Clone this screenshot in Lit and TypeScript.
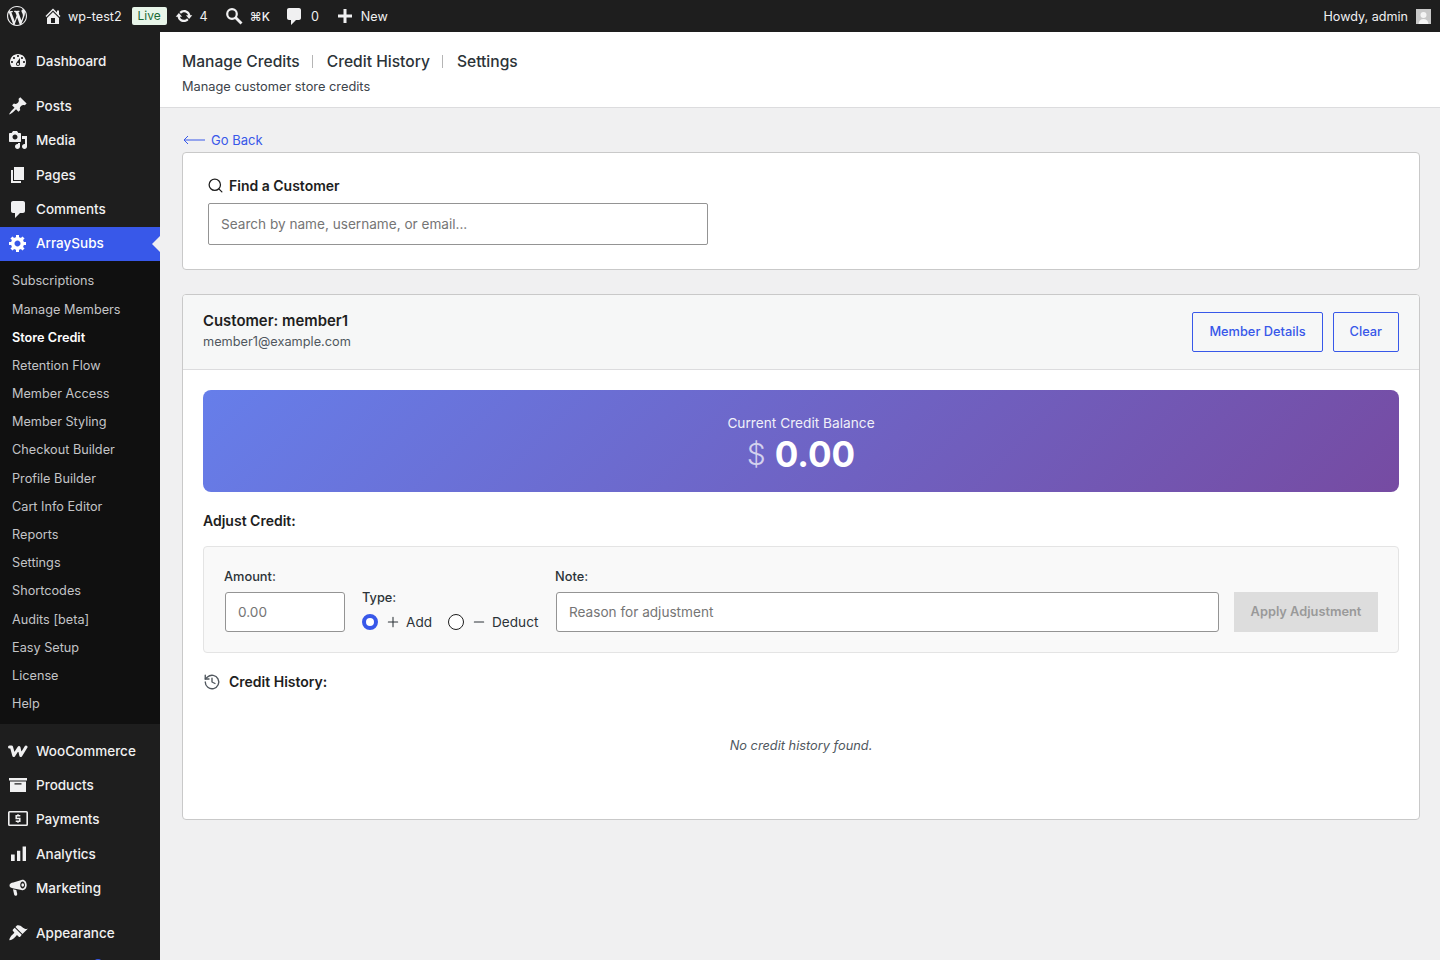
import { LitElement, html, css, svg } from 'lit';
import { customElement } from 'lit/decorators.js';

const dash = (d: string) => html`<svg class="dash" viewBox="0 0 20 20" fill="currentColor"><path d=${d} /></svg>`;

const icons: Record<string, unknown> = {
  wp: dash('M20 10c0-5.51-4.49-10-10-10C4.48 0 0 4.49 0 10c0 5.52 4.48 10 10 10 5.51 0 10-4.48 10-10zM7.78 15.37L4.37 6.22c.55-.02 1.17-.08 1.17-.08.5-.06.44-1.13-.06-1.11 0 0-1.45.11-2.37.11-.18 0-.37 0-.58-.01C4.12 2.69 6.87 1.11 10 1.11c2.33 0 4.45.87 6.05 2.34-.68-.11-1.65.39-1.65 1.58 0 .74.45 1.36.9 2.1.35.61.55 1.36.55 2.46 0 1.49-1.4 5-1.4 5l-3.03-8.37c.54-.02.82-.17.82-.17.5-.05.44-1.25-.06-1.22 0 0-1.44.12-2.38.12-.87 0-2.33-.12-2.33-.12-.5-.03-.56 1.2-.06 1.22l.92.08 1.26 3.41zM17.41 10c.24-.64.74-1.87.43-4.25.7 1.29 1.05 2.71 1.05 4.25 0 3.29-1.73 6.24-4.4 7.78.97-2.59 1.94-5.2 2.92-7.78zM6.1 18.09C3.12 16.65 1.11 13.53 1.11 10c0-1.3.23-2.48.72-3.59C3.25 10.3 4.67 14.2 6.1 18.09zm4.03-6.63l2.58 6.98c-.86.29-1.76.45-2.71.45-.79 0-1.57-.11-2.29-.33.81-2.38 1.62-4.74 2.42-7.1z'),
  home: dash('M16 8.5l1.53 1.53-1.06 1.06L10 4.62l-6.47 6.47-1.06-1.06L10 2.5l4 4v-2h2v4zm-6-2.46l6 5.99V18H4v-5.97zM12 17v-5H8v5h4z'),
  update: dash('M10.2 3.28c3.53 0 6.43 2.61 6.92 6h2.08l-3.5 4-3.5-4h2.32c-.45-1.97-2.21-3.45-4.32-3.45-1.45 0-2.73.71-3.54 1.78L4.95 5.66C6.23 4.2 8.11 3.28 10.2 3.28zm-.4 13.44c-3.52 0-6.43-2.61-6.92-6H.8l3.5-4c1.17 1.33 2.33 2.67 3.5 4H5.48c.45 1.97 2.21 3.45 4.32 3.45 1.45 0 2.73-.71 3.54-1.78l1.71 1.95c-1.28 1.46-3.15 2.38-5.25 2.38z'),
  search: html`<svg class="dash" viewBox="0 0 20 20" fill="none" stroke="currentColor"><circle cx="8" cy="8" r="4.800" stroke-width="2.200" /><path d="M11.500 11.500l6 6" stroke-width="2.800" /></svg>`,
  comment: dash('M5 2h10c1.1 0 2 .9 2 2v8c0 1.1-.9 2-2 2h-3l-5 5v-5H5c-1.1 0-2-.9-2-2V4c0-1.1.9-2 2-2z'),
  plus: dash('M17 8.500v3h-5.500V17h-3v-5.500H3v-3h5.500V3h3v5.500H17z'),
  dashboard: dash('M3.76 16h12.48c1.1-1.37 1.76-3.11 1.76-5 0-4.42-3.58-8-8-8s-8 3.58-8 8c0 1.89.66 3.63 1.76 5zM10 4c.55 0 1 .45 1 1s-.45 1-1 1-1-.45-1-1 .45-1 1-1zM6 6c.55 0 1 .45 1 1s-.45 1-1 1-1-.45-1-1 .45-1 1-1zm8 0c.55 0 1 .45 1 1s-.45 1-1 1-1-.45-1-1 .45-1 1-1zm-5.37 5.55L12 7v6c0 1.1-.9 2-2 2s-2-.9-2-2c0-.57.24-1.08.63-1.45zM4 10c.55 0 1 .45 1 1s-.45 1-1 1-1-.45-1-1 .45-1 1-1zm12 0c.55 0 1 .45 1 1s-.45 1-1 1-1-.45-1-1 .45-1 1-1zm-5 3c0-.55-.45-1-1-1s-1 .45-1 1 .45 1 1 1 1-.45 1-1z'),
  posts: dash('M10.44 3.02l1.82-1.82 6.36 6.35-1.83 1.82c-1.05-.68-2.48-.57-3.41.36l-.75.75c-.92.93-1.04 2.35-.35 3.41l-1.83 1.82-2.41-2.41-2.8 2.79c-.42.42-3.38 2.71-3.8 2.29s1.86-3.39 2.28-3.81l2.79-2.79L4.1 9.36l1.83-1.82c1.05.69 2.48.57 3.4-.36l.75-.75c.93-.92 1.05-2.35.36-3.41z'),
  media: dash('M13 11V4c0-.55-.45-1-1-1h-1.67L9 1H5L3.67 3H2c-.55 0-1 .45-1 1v7c0 .55.45 1 1 1h10c.55 0 1-.45 1-1zM7 4.5c1.38 0 2.5 1.12 2.5 2.5S8.38 9.5 7 9.5 4.5 8.38 4.5 7 5.62 4.5 7 4.5zM14 6h5v10.5c0 1.38-1.12 2.5-2.5 2.5S14 17.88 14 16.5s1.12-2.5 2.5-2.5c.17 0 .34.02.5.05V9h-3V6zm-4 8.05V13h2v3.5c0 1.38-1.12 2.5-2.5 2.5S7 17.88 7 16.5 8.12 14 9.5 14c.17 0 .34.02.5.05z'),
  pages: dash('M6 15V2h10v13H6zm-1 1h8v2H3V5h2v11z'),
  gear: dash('M18 12h-2.18c-.17.7-.44 1.35-.81 1.93l1.54 1.54-2.1 2.1-1.54-1.54c-.58.36-1.23.63-1.91.79V19H8v-2.18c-.68-.16-1.33-.43-1.91-.79l-1.54 1.54-2.12-2.12 1.54-1.54c-.36-.58-.63-1.23-.79-1.91H1V9.03h2.17c.16-.7.44-1.35.8-1.94L2.43 5.55l2.1-2.1 1.54 1.54c.58-.37 1.24-.64 1.93-.81V2h3v2.18c.68.16 1.33.43 1.91.79l1.54-1.54 2.12 2.12-1.54 1.54c.36.59.64 1.24.8 1.94H18V12zm-8.5 1.5c1.66 0 3-1.34 3-3s-1.34-3-3-3-3 1.34-3 3 1.34 3 3 3z'),
  woo: html`<svg class="dash" viewBox="0 0 20 20" fill="none" stroke="currentColor" stroke-width="3" stroke-linejoin="round" stroke-linecap="round"><path d="M1.500 6h2l2.300 8.500L11 6.500l1.800 8L18 6" /></svg>`,
  products: dash('M19 3v2.400H1V3h18zM2 6.400h16V17H2V6.400zm11.500 3V8.200h-7v1.200h7z'),
  payments: html`<svg class="dash" viewBox="0 0 20 20" fill="none" stroke="currentColor"><rect x=".800" y="2.800" width="18.400" height="13.400" rx=".8" stroke-width="1.600" /><path d="M12.300 6.800H8.200v2.600h3.600v2.800H7.700M10 5.200v1.600M10 12.200v1.600" stroke-width="1.500" /></svg>`,
  analytics: dash('M18 17V2.500h-3.400V17H18zm-5.700 0V6.800H9V17h3.300zm-5.600 0v-6.500H3V17h3.700z'),
  marketing: dash('M14.600 1.800c2.300 0 4.100 2.300 4.100 5.200s-1.800 5.200-4.100 5.200c-.4 0-.8-.1-1.100-.2L5.700 10.400C3.200 10.200 1.500 9.300 1.500 7.500s1.600-2.700 3.800-3l8.200-2.500c.3-.1.700-.2 1.100-.2zm0 1.600c-1.200 0-2.400 1.500-2.400 3.600s1.200 3.600 2.400 3.600S17 9.100 17 7s-1.200-3.600-2.400-3.600zm.1 1.900c.8 0 1.300.8 1.300 1.700s-.5 1.700-1.300 1.700-1.300-.8-1.300-1.700.5-1.700 1.300-1.700zM5 11.200l3.300.8.900 3.800c.2.800-.3 1.700-1.100 1.900-.8.200-1.600-.2-1.900-1L5 11.200z'),
  appearance: dash('M14.480 11.060L7.410 3.990l1.500-1.500c.5-.56 2.300-.47 3.510.32 1.210.8 1.430 1.280 2.910 2.100 1.180.64 2.450 1.260 4.450.85zm-.710.710L6.700 4.700 4.930 6.470c-.39.39-.39 1.020 0 1.410l1.060 1.060c.39.39.39 1.030 0 1.420-.6.6-2.500 2.100-3.200 3.100-.7 1-1.800 3.200-1.300 3.700.5.500 2.700-.6 3.700-1.300 1-.7 2.500-2.600 3.100-3.200.39-.39 1.030-.39 1.420 0l1.060 1.060c.39.39 1.020.39 1.410 0z'),
  plugins: dash('M13.110 4.360L9.870 7.600 8 5.730l3.240-3.240c.35-.34 1.050-.2 1.560.32.520.51.660 1.210.31 1.550zm-8 1.770l.91-1.120 9.010 9.010-1.190.84c-.71.710-2.630 1.160-3.820 1.160H6.140L4.900 17.260c-.59.59-1.540.59-2.120 0-.59-.58-.59-1.530 0-2.120l1.240-1.240v-3.880c0-1.130.4-3.190 1.090-3.890zm7.260 3.970l3.240-3.240c.34-.35 1.040-.21 1.550.31.520.51.660 1.210.31 1.550l-3.240 3.250z'),
};

const lucide = (body: unknown, cls = 'line') => html`<svg class=${cls} viewBox="0 0 24 24" fill="none" stroke="currentColor" stroke-width="1.800" stroke-linecap="round" stroke-linejoin="round">${body}</svg>`;

const subItems = ['Subscriptions', 'Manage Members', 'Store Credit', 'Retention Flow', 'Member Access', 'Member Styling', 'Checkout Builder', 'Profile Builder', 'Cart Info Editor', 'Reports', 'Settings', 'Shortcodes', 'Audits [beta]', 'Easy Setup', 'License', 'Help'];

@customElement('app-root')
export class AppRoot extends LitElement {
  static styles = css`
    :host {
      display: block;
      height: 960px;
      overflow: hidden;
      background: #f0f0f1;
      font-family: Inter, 'Noto Sans', sans-serif;
      color: #1e1e1e;
      font-size: 13px;
    }
    * { box-sizing: border-box; }
    .dash { width: 20px; height: 20px; display: block; flex: none; }
    .line { width: 16px; height: 16px; display: block; flex: none; }

    .adminbar {
      height: 32px;
      background: #1e1e1e;
      color: #f0f0f1;
      display: flex;
      align-items: center;
      padding: 0 9px 0 7px;
      font-size: 12.600px;
    }
    .ab-item { display: flex; align-items: center; }
    .wp { margin-right: 16px; }
    .site { gap: 5px; margin-right: 10px; }
    .live {
      background: #e8f5e9;
      color: #1a6b35;
      font-size: 12px;
      line-height: 18px;
      height: 18px;
      width: 35px;
      text-align: center;
      border-radius: 2px;
      margin-right: 8px;
    }
    .updates { gap: 7px; margin-right: 16px; }
    .updates .dash { width: 18px; height: 18px; }
    .finder { gap: 6px; margin-right: 14px; font-size: 12px; font-weight: 500; }
    .comments { gap: 7px; margin-right: 16px; }
    .new { gap: 6px; }
    .howdy { margin-left: auto; display: flex; align-items: center; gap: 8px; }
    .avatar { width: 15px; height: 15px; display: block; }

    .body { display: flex; height: 928px; }
    .sidebar { width: 160px; flex: none; background: #1e1e1e; color: #f0f0f1; padding-top: 12px; overflow: hidden; }
    .item {
      height: 34.330px;
      display: flex;
      align-items: center;
      padding-left: 8px;
      padding-bottom: 1px;
      gap: 8px;
      font-size: 13.500px;
      font-weight: 500;
      position: relative;
    }
    .item .dash { color: #f0f0f1; }
    .item.gap { margin-top: 11px; }
    .item.woo { margin-top: 10px; }
    .item.current { background: #3858e9; color: #fff; }
    .item.current .dash { color: #fff; }
    .item.current::after {
      content: '';
      position: absolute;
      right: 0;
      top: 9px;
      border: 8px solid transparent;
      border-right-color: #f0f0f1;
      border-left: 0;
    }
    .badge {
      position: absolute;
      left: 94px;
      top: 8px;
      width: 8px;
      height: 16px;
      border-radius: 4px;
      background: #3858e9;
    }
    .sub { background: #101010; padding: 6.400px 0 5.600px; }
    .sub div { height: 28.200px; line-height: 27.200px; padding-left: 12px; font-size: 12.700px; color: #c3c4c7; }
    .sub .on { color: #fff; font-weight: 600; }

    .main { flex: 1; min-width: 0; }
    .head { height: 76px; background: #fff; border-bottom: 1px solid #dcdcde; padding: 17px 22px 0; }
    .tabs { display: flex; align-items: center; height: 24px; font-size: 15.600px; font-weight: 500; color: #2c3338; }
    .tabs i { width: 1px; height: 13px; background: #b5b5b5; margin: 0 14px 0 12px; }
    .desc { margin-top: 5px; height: 18px; line-height: 18px; font-size: 12.800px; color: #3c434a; }

    .content { padding: 0 20px 0 22px; }
    .back { display: flex; align-items: center; gap: 6px; height: 18px; margin-top: 23px; color: #3858e9; font-size: 13px; }
    .back svg { width: 22px; height: 10px; display: block; margin-left: 1px; }
    .card { background: #fff; border: 1px solid #c9c9c9; border-radius: 4px; }
    .find { margin-top: 3px; height: 118px; padding: 23px 25px; }
    .find-title { display: flex; align-items: center; gap: 5px; height: 18px; font-size: 14px; font-weight: 600; margin-left: -1px; }
    .find-title .line { width: 17px; height: 17px; }
    input {
      display: block;
      font: inherit;
      font-size: 13.600px;
      background: #fff;
      border: 1px solid #949494;
      border-radius: 2px;
      padding: 0 12px;
      color: #1e1e1e;
      outline: none;
    }
    input::placeholder { color: #757575; opacity: 1; }
    .find input { margin-top: 9px; width: 500px; height: 42px; }

    .customer { margin-top: 24px; height: 526px; overflow: hidden; }
    .cust-head {
      height: 75px;
      background: #f6f7f7;
      border-bottom: 1px solid #dcdcde;
      display: flex;
      align-items: center;
      justify-content: space-between;
      padding: 0 20px;
    }
    .cust-who { margin-top: -3px; }
    .cust-name { font-size: 14.900px; font-weight: 600; line-height: 20px; margin-bottom: 2px; }
    .cust-mail { font-size: 12.750px; line-height: 18px; color: #50575e; }
    .btns { display: flex; gap: 10px; }
    .btn {
      height: 40px;
      padding: 0 16px 1px;
      display: flex;
      align-items: center;
      border: 1px solid #3858e9;
      border-radius: 2px;
      color: #3858e9;
      font-size: 12.800px;
      font-weight: 500;
    }
    .cust-body { padding: 20px 20px 0; }
    .balance {
      height: 102px;
      border-radius: 8px;
      background: linear-gradient(135deg, #667eea 0%, #764ba2 100%);
      color: #fff;
      text-align: center;
      padding-top: 24px;
    }
    .bal-label { font-size: 13.700px; line-height: 18px; opacity: 0.9; }
    .bal-value { display: flex; justify-content: center; align-items: center; gap: 9px; height: 44px; }
    .bal-value .amt { font-size: 35px; font-weight: 700; line-height: 44px; }
    .bal-value .cur { font-size: 30px; font-weight: 300; line-height: 44px; opacity: 0.7; }
    h3 { margin: 0; font-size: 14px; font-weight: 600; line-height: 18px; }
    .adjust-title { margin-top: 20px; }
    .panel {
      margin-top: 16px;
      height: 107px;
      background: #f9f9f9;
      border: 1px solid #e4e4e4;
      border-radius: 4px;
      padding: 20px;
      display: flex;
      align-items: flex-end;
    }
    label { display: block; font-size: 12.800px; font-weight: 500; line-height: 18px; color: #2c3338; }
    .amount { width: 121px; }
    .amount input { margin: 6px 0 0 1px; width: 120px; height: 40px; border-radius: 3px; }
    .type { margin-left: 17px; width: 177px; }
    .radios { display: flex; align-items: center; height: 20px; margin-top: 5px; font-size: 13.600px; color: #2c3338; }
    .radios span:not(.radio) { margin-top: -1px; }
    .radio { width: 16px; height: 16px; border-radius: 50%; border: 1px solid #1e1e1e; flex: none; background: #fff; }
    .radio.on { border: 4px solid #3858e9; }
    .radios .line { width: 14px; height: 14px; margin-left: 8px; margin-right: 6px; }
    .radios .deduct { margin-left: 16px; }
    .note { margin-left: 16px; flex: 1; }
    .note input { margin: 6px 0 0 1px; width: calc(100% - 1px); height: 40px; border-radius: 3px; }
    .apply {
      margin-left: 15px;
      width: 144px;
      height: 40px;
      padding-bottom: 1px;
      background: #dddddd;
      color: #999999;
      font-size: 12.800px;
      font-weight: 600;
      display: flex;
      align-items: center;
      justify-content: center;
    }
    .hist-title { margin-top: 20px; display: flex; align-items: center; gap: 8px; }
    .hist-title .line { width: 18px; height: 18px; color: #50575e; }
    .empty { margin-top: 46px; text-align: center; font-style: italic; font-size: 12.800px; line-height: 18px; color: #50575e; }
  `;

  private item(icon: string, label: string, cls = '') {
    return html`<div class="item ${cls}">${icons[icon]}<span>${label}</span></div>`;
  }

  render() {
    return html`
      <div class="adminbar">
        <div class="ab-item wp">${icons.wp}</div>
        <div class="ab-item site">${icons.home}<span>wp-test2</span></div>
        <div class="live">Live</div>
        <div class="ab-item updates">${icons.update}<span>4</span></div>
        <div class="ab-item finder">${icons.search}<span>⌘K</span></div>
        <div class="ab-item comments">${icons.comment}<span>0</span></div>
        <div class="ab-item new">${icons.plus}<span>New</span></div>
        <div class="howdy">
          <span>Howdy, admin</span>
          <svg class="avatar" viewBox="0 0 15 15">
            <rect width="15" height="15" fill="#c8c8c8" />
            <circle cx="7.500" cy="6" r="3" fill="#f4f4f4" />
            <path d="M2.500 15c.3-3.500 2.300-5 5-5s4.700 1.500 5 5z" fill="#f4f4f4" />
          </svg>
        </div>
      </div>
      <div class="body">
        <nav class="sidebar">
          ${this.item('dashboard', 'Dashboard')}
          ${this.item('posts', 'Posts', 'gap')}
          ${this.item('media', 'Media')}
          ${this.item('pages', 'Pages')}
          ${this.item('comment', 'Comments')}
          ${this.item('gear', 'ArraySubs', 'current')}
          <div class="sub">
            ${subItems.map((s) => html`<div class=${s === 'Store Credit' ? 'on' : ''}>${s}</div>`)}
          </div>
          ${this.item('woo', 'WooCommerce', 'woo')}
          ${this.item('products', 'Products')}
          ${this.item('payments', 'Payments')}
          ${this.item('analytics', 'Analytics')}
          ${this.item('marketing', 'Marketing')}
          ${this.item('appearance', 'Appearance', 'gap')}
          <div class="item">${icons.plugins}<b class="badge"></b></div>
        </nav>
        <main class="main">
          <header class="head">
            <div class="tabs">
              <span>Manage Credits</span><i></i><span>Credit History</span><i></i><span>Settings</span>
            </div>
            <div class="desc">Manage customer store credits</div>
          </header>
          <div class="content">
            <div class="back">
              <svg viewBox="0 0 22 10" fill="none" stroke="currentColor" stroke-width="1"><path d="M22 5H1M5 1L1 5l4 4" /></svg>
              <span>Go Back</span>
            </div>
            <section class="card find">
              <div class="find-title">
                ${lucide(svg`<circle cx="11" cy="11" r="8" /><path d="M21 21l-4.300-4.300" />`)}
                <span>Find a Customer</span>
              </div>
              <input placeholder="Search by name, username, or email..." />
            </section>
            <section class="card customer">
              <div class="cust-head">
                <div class="cust-who">
                  <div class="cust-name">Customer: member1</div>
                  <div class="cust-mail">member1@example.com</div>
                </div>
                <div class="btns">
                  <div class="btn">Member Details</div>
                  <div class="btn">Clear</div>
                </div>
              </div>
              <div class="cust-body">
                <div class="balance">
                  <div class="bal-label">Current Credit Balance</div>
                  <div class="bal-value">
                    <span class="cur">$</span>
                    <span class="amt">0.00</span>
                  </div>
                </div>
                <h3 class="adjust-title">Adjust Credit:</h3>
                <div class="panel">
                  <div class="amount">
                    <label>Amount:</label>
                    <input placeholder="0.00" />
                  </div>
                  <div class="type">
                    <label>Type:</label>
                    <div class="radios">
                      <span class="radio on"></span>
                      ${lucide(svg`<path d="M12 4v16M4 12h16" />`)}
                      <span>Add</span>
                      <span class="radio deduct"></span>
                      ${lucide(svg`<path d="M4 12h16" />`)}
                      <span>Deduct</span>
                    </div>
                  </div>
                  <div class="note">
                    <label>Note:</label>
                    <input placeholder="Reason for adjustment" />
                  </div>
                  <div class="apply">Apply Adjustment</div>
                </div>
                <h3 class="hist-title">
                  ${lucide(svg`<path d="M3 12a9 9 0 1 0 3-6.700L3 8" /><path d="M3 3v5h5" /><path d="M12 7v5l4 2" />`)}
                  <span>Credit History:</span>
                </h3>
                <div class="empty">No credit history found.</div>
              </div>
            </section>
          </div>
        </main>
      </div>
    `;
  }
}
